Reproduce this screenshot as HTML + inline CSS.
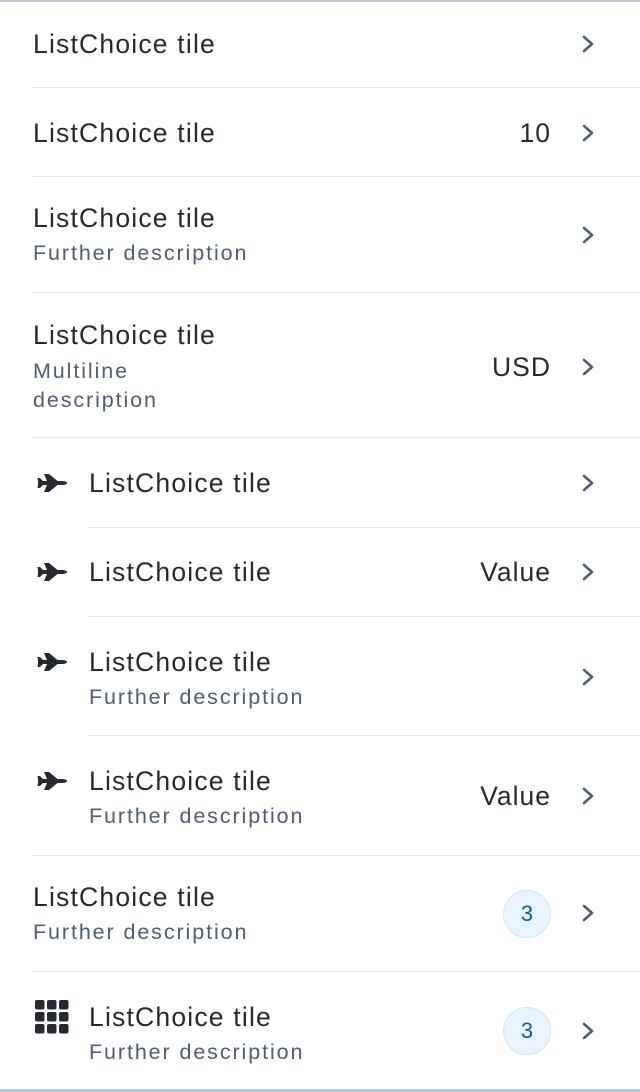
<!DOCTYPE html>
<html><head><meta charset="utf-8"><style>
body{margin:0;width:640px;height:1092px;position:relative;background:#fff;overflow:hidden;font-family:"Liberation Sans",sans-serif}
.t,.d,.v{position:absolute;white-space:nowrap}
.t{font-size:26.5px;color:#252a31;line-height:30px;left:33px;letter-spacing:1.2px}
.d{font-size:21.5px;color:#4f5e71;line-height:28px;left:33px;letter-spacing:1.9px}
.v{font-size:26.5px;color:#252a31;line-height:30px;right:89px;letter-spacing:1px}
.i .t,.i .d{left:89px}
.sep{position:absolute;right:0;height:1px;background:#e8ebee}
.ch{position:absolute;left:580px;width:16px;height:20px}
.badge{position:absolute;left:503px;width:46px;height:46px;border-radius:50%;background:#e8f4fd;border:1.5px solid #cde4f7;color:#0b5ea8;font-size:22px;line-height:46px;text-align:center}
.pl{position:absolute;left:37px;width:30px;height:18px}
</style></head><body>
<div style="position:absolute;top:0;left:0;right:0;height:2px;background:#bac7d5"></div>
<div style="position:absolute;top:1089px;left:0;right:0;height:3px;background:#bac7d5"></div>

<svg width="0" height="0" style="position:absolute"><defs>
<symbol id="chev" viewBox="0 0 16 20"><path d="M4 3 L12 10 L4 17" fill="none" stroke="#4f5e71" stroke-width="2.6" stroke-linecap="round" stroke-linejoin="round"/></symbol>
<symbol id="plane" viewBox="0 0 30 18"><path d="M1 7 L26 7 Q30 7.5 30 9 Q30 10.5 26 11 L1 11 Z M7 0 L12 0 L20.5 7 L10 7 Z M10 11 L20.5 11 L12 18 L7 18 Z M0.5 4 L3 4 L6 7 L1 7 Z M1 11 L6 11 L3 14 L0.5 14 Z" fill="#252a31"/></symbol>
</defs></svg>

<div class="t" style="top:29px">ListChoice tile</div>
<svg class="ch" style="top:34px"><use href="#chev"/></svg>
<div class="sep" style="top:87px;left:32px"></div>

<div class="t" style="top:118px">ListChoice tile</div>
<div class="v" style="top:118px">10</div>
<svg class="ch" style="top:123px"><use href="#chev"/></svg>
<div class="sep" style="top:176px;left:32px"></div>

<div class="t" style="top:203px">ListChoice tile</div>
<div class="d" style="top:239px">Further description</div>
<svg class="ch" style="top:225px"><use href="#chev"/></svg>
<div class="sep" style="top:292px;left:32px"></div>

<div class="t" style="top:320px">ListChoice tile</div>
<div class="d" style="top:357px">Multiline</div>
<div class="d" style="top:386px">description</div>
<div class="v" style="top:352px">USD</div>
<svg class="ch" style="top:357px"><use href="#chev"/></svg>
<div class="sep" style="top:437px;left:32px"></div>

<div class="i">
<svg class="pl" style="top:474px"><use href="#plane"/></svg>
<div class="t" style="top:468px">ListChoice tile</div>
<svg class="ch" style="top:473px"><use href="#chev"/></svg>
<div class="sep" style="top:527px;left:88px"></div>

<svg class="pl" style="top:563px"><use href="#plane"/></svg>
<div class="t" style="top:557px">ListChoice tile</div>
<div class="v" style="top:557px">Value</div>
<svg class="ch" style="top:562px"><use href="#chev"/></svg>
<div class="sep" style="top:616px;left:88px"></div>

<svg class="pl" style="top:653px"><use href="#plane"/></svg>
<div class="t" style="top:647px">ListChoice tile</div>
<div class="d" style="top:683px">Further description</div>
<svg class="ch" style="top:667px"><use href="#chev"/></svg>
<div class="sep" style="top:735px;left:88px"></div>

<svg class="pl" style="top:772px"><use href="#plane"/></svg>
<div class="t" style="top:766px">ListChoice tile</div>
<div class="d" style="top:802px">Further description</div>
<div class="v" style="top:781px">Value</div>
<svg class="ch" style="top:786px"><use href="#chev"/></svg>
<div class="sep" style="top:855px;left:32px"></div>

<div class="t" style="top:882px;left:33px">ListChoice tile</div>
<div class="d" style="top:918px;left:33px">Further description</div>
<div class="badge" style="top:890px">3</div>
<svg class="ch" style="top:903px"><use href="#chev"/></svg>
<div class="sep" style="top:971px;left:32px"></div>

<svg style="position:absolute;left:35px;top:1000px" width="34" height="34" viewBox="0 0 34 34" fill="#252a31">
<rect x="0" y="0" width="9.5" height="9.5" rx="2"/><rect x="12" y="0" width="9.5" height="9.5" rx="2"/><rect x="24" y="0" width="9.5" height="9.5" rx="2"/>
<rect x="0" y="12" width="9.5" height="9.5" rx="2"/><rect x="12" y="12" width="9.5" height="9.5" rx="2"/><rect x="24" y="12" width="9.5" height="9.5" rx="2"/>
<rect x="0" y="24" width="9.5" height="9.5" rx="2"/><rect x="12" y="24" width="9.5" height="9.5" rx="2"/><rect x="24" y="24" width="9.5" height="9.5" rx="2"/>
</svg>
<div class="t" style="top:1002px">ListChoice tile</div>
<div class="d" style="top:1038px">Further description</div>
<div class="badge" style="top:1007px">3</div>
<svg class="ch" style="top:1021px"><use href="#chev"/></svg>
</div>
</body></html>
